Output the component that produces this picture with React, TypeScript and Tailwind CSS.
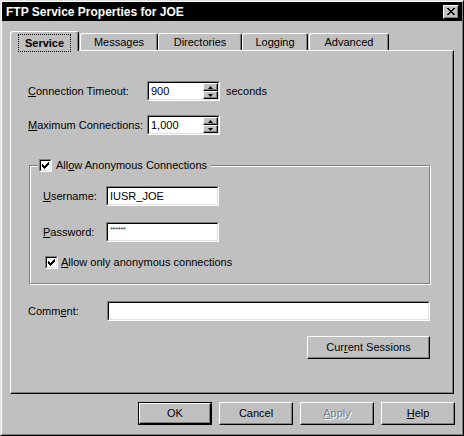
import React from "react";

const font = { fontFamily: '"Liberation Sans", Arial, sans-serif' };

function U({ children }: { children: React.ReactNode }) {
  return <span className="underline underline-offset-[1px]">{children}</span>;
}

function Sunken({
  width,
  children,
}: {
  width: string;
  children?: React.ReactNode;
}) {
  return (
    <div
      className={`${width} h-[20px] border border-t-[#808080] border-l-[#808080] border-r-white border-b-white`}
    >
      <div className="h-full w-full border border-t-black border-l-black border-r-[#dfdfdf] border-b-[#dfdfdf] bg-white flex items-center pl-[2px] relative">
        {children}
      </div>
    </div>
  );
}

function SpinArrow({ up }: { up?: boolean }) {
  return (
    <div className="w-[15px] h-[8px] bg-[#c0c0c0] border border-t-white border-l-white border-r-black border-b-black shadow-[inset_-1px_-1px_0_#808080] flex items-center justify-center">
      <svg width="5" height="3" viewBox="0 0 5 3">
        {up ? (
          <polygon points="2.5,0 5,3 0,3" fill="#000" />
        ) : (
          <polygon points="0,0 5,0 2.5,3" fill="#000" />
        )}
      </svg>
    </div>
  );
}

function SpinBox({ value }: { value: string }) {
  return (
    <Sunken width="w-[73px]">
      <span className="text-[11px] text-black">{value}</span>
      <div className="absolute right-0 top-0 flex flex-col">
        <SpinArrow up />
        <SpinArrow />
      </div>
    </Sunken>
  );
}

function CheckBox() {
  return (
    <div className="w-[13px] h-[13px] shrink-0 border border-t-[#808080] border-l-[#808080] border-r-white border-b-white">
      <div className="w-full h-full border border-t-black border-l-black border-r-[#dfdfdf] border-b-[#dfdfdf] bg-white flex items-center justify-center">
        <svg width="7" height="7" viewBox="0 0 7 7" shapeRendering="crispEdges">
          <path
            d="M0 2h1v3h-1zM1 3h1v3h-1zM2 4h1v3h-1zM3 3h1v3h-1zM4 2h1v3h-1zM5 1h1v3h-1zM6 0h1v3h-1z"
            fill="#000"
          />
        </svg>
      </div>
    </div>
  );
}

function Button({
  children,
  w,
  isDefault,
  disabled,
}: {
  children: React.ReactNode;
  w: string;
  isDefault?: boolean;
  disabled?: boolean;
}) {
  const inner = (
    <div
      className={`h-full w-full bg-[#c0c0c0] border border-t-white border-l-white border-r-black border-b-black shadow-[inset_-1px_-1px_0_#808080] flex items-center justify-center text-[11px] ${
        disabled ? "text-[#808080] [text-shadow:1px_1px_0_#fff]" : "text-black"
      }`}
    >
      {children}
    </div>
  );
  if (isDefault)
    return <div className={`${w} h-[23px] border border-black`}>{inner}</div>;
  return <div className={`${w} h-[23px]`}>{inner}</div>;
}

function Tab({
  label,
  w,
  selected,
  ml,
}: {
  label: string;
  w: string;
  selected?: boolean;
  ml?: string;
}) {
  if (selected)
    return (
      <div
        className={`${w} ${ml ?? ""} h-[20px] -mb-px relative z-10 bg-[#c0c0c0] rounded-t-[3px] border-t border-l border-r border-t-white border-l-white border-r-black shadow-[inset_-1px_0_0_#808080] flex items-center justify-center`}
      >
        <span className="px-[6px] py-[2px] mt-[2px] outline outline-1 outline-dotted outline-black text-[11px] font-bold text-black leading-[12px]">
          {label}
        </span>
      </div>
    );
  return (
    <div
      className={`${w} ${ml ?? ""} mt-[2px] h-[17px] bg-[#c0c0c0] rounded-t-[3px] border-t border-l border-r border-t-white border-l-white border-r-black shadow-[inset_-1px_0_0_#808080] flex items-center justify-center text-[11px] text-black`}
    >
      {label}
    </div>
  );
}

export default function App() {
  return (
    <div
      className="w-[464px] h-[436px] bg-[#c0c0c0] border border-t-[#dfdfdf] border-l-[#dfdfdf] border-r-black border-b-black text-black"
      style={font}
    >
      <div className="w-full h-full border border-t-white border-l-white border-r-[#808080] border-b-[#808080] flex flex-col">
        {/* title bar */}
        <div className="h-[19px] bg-black flex items-center justify-between pl-[4px] pr-[3px]">
          <span className="text-white text-[12px] font-bold">
            FTP Service Properties for JOE
          </span>
          <div className="w-[16px] h-[14px] bg-[#c0c0c0] border border-t-white border-l-white border-r-black border-b-black shadow-[inset_-1px_-1px_0_#808080] flex items-center justify-center">
            <svg width="8" height="7" viewBox="0 0 8 7" shapeRendering="crispEdges">
              <path
                d="M0 0h2v1h-2zM6 0h2v1h-2zM1 1h2v1h-2zM5 1h2v1h-2zM2 2h4v1h-4zM3 3h2v1h-2zM2 4h4v1h-4zM1 5h2v1h-2zM5 5h2v1h-2zM0 6h2v1h-2zM6 6h2v1h-2z"
                fill="#000"
              />
            </svg>
          </div>
        </div>

        {/* tabs */}
        <div className="mt-[10px] ml-[8px] flex items-start">
          <Tab label="Service" w="w-[69px]" selected />
          <Tab label="Messages" w="w-[78px]" ml="ml-[1px]" />
          <Tab label="Directories" w="w-[84px]" />
          <Tab label="Logging" w="w-[66px]" />
          <Tab label="Advanced" w="w-[80px]" ml="ml-[1px]" />
        </div>

        {/* panel */}
        <div className="ml-[8px] w-[444px] h-[344px] border border-t-white border-l-white border-r-black border-b-black shadow-[inset_-1px_-1px_0_#808080] text-[11px]">
          <div className="mt-[30px] ml-[17px] flex items-center h-[20px]">
            <span className="w-[119px]">
              <U>C</U>onnection Timeout:
            </span>
            <SpinBox value="900" />
            <span className="ml-[6px]">seconds</span>
          </div>
          <div className="mt-[14px] ml-[17px] flex items-center h-[20px]">
            <span className="w-[119px]">
              <U>M</U>aximum Connections:
            </span>
            <SpinBox value="1,000" />
          </div>

          {/* group box */}
          <div className="mt-[30px] ml-[18px] w-[402px] h-[120px] relative border border-t-[#808080] border-l-[#808080] border-r-white border-b-white">
            <div className="h-full w-full border border-t-white border-l-white border-r-[#808080] border-b-[#808080] pt-[19px] pl-[12px]">
              <div className="flex items-center h-[20px]">
                <span className="w-[63px]">
                  <U>U</U>sername:
                </span>
                <Sunken width="w-[113px]">
                  <span className="text-[11px]">IUSR_JOE</span>
                </Sunken>
              </div>
              <div className="mt-[16px] flex items-center h-[20px]">
                <span className="w-[63px]">
                  <U>P</U>assword:
                </span>
                <Sunken width="w-[113px]">
                  <span className="text-[8px] text-[#404040] tracking-[-0.5px] -mt-[5px]">
                    ******
                  </span>
                </Sunken>
              </div>
              <div className="mt-[14px] ml-[2px] flex items-center gap-[3px] h-[13px]">
                <CheckBox />
                <span>
                  <U>A</U>llow only anonymous connections
                </span>
              </div>
            </div>
            <div className="absolute -top-[8px] left-[8px] h-[14px] bg-[#c0c0c0] flex items-center gap-[4px] pl-[1px] pr-[4px]">
              <CheckBox />
              <span>
                All<U>o</U>w Anonymous Connections
              </span>
            </div>
          </div>

          <div className="mt-[16px] ml-[17px] w-[402px] flex items-center h-[20px]">
            <span className="w-[79px]">
              Comm<U>e</U>nt:
            </span>
            <Sunken width="w-[323px]" />
          </div>
          <div className="mt-[15px] ml-[17px] w-[402px] flex justify-end">
            <Button w="w-[123px]">
              <span>
                Cur<U>r</U>ent Sessions
              </span>
            </Button>
          </div>
        </div>

        {/* dialog buttons */}
        <div className="mt-[8px] pr-[7px] flex justify-end gap-[7px]">
          <Button w="w-[74px]" isDefault>
            OK
          </Button>
          <Button w="w-[74px]">Cancel</Button>
          <Button w="w-[74px]" disabled>
            <span>
              <U>A</U>pply
            </span>
          </Button>
          <Button w="w-[74px]">
            <span>
              <U>H</U>elp
            </span>
          </Button>
        </div>
      </div>
    </div>
  );
}
